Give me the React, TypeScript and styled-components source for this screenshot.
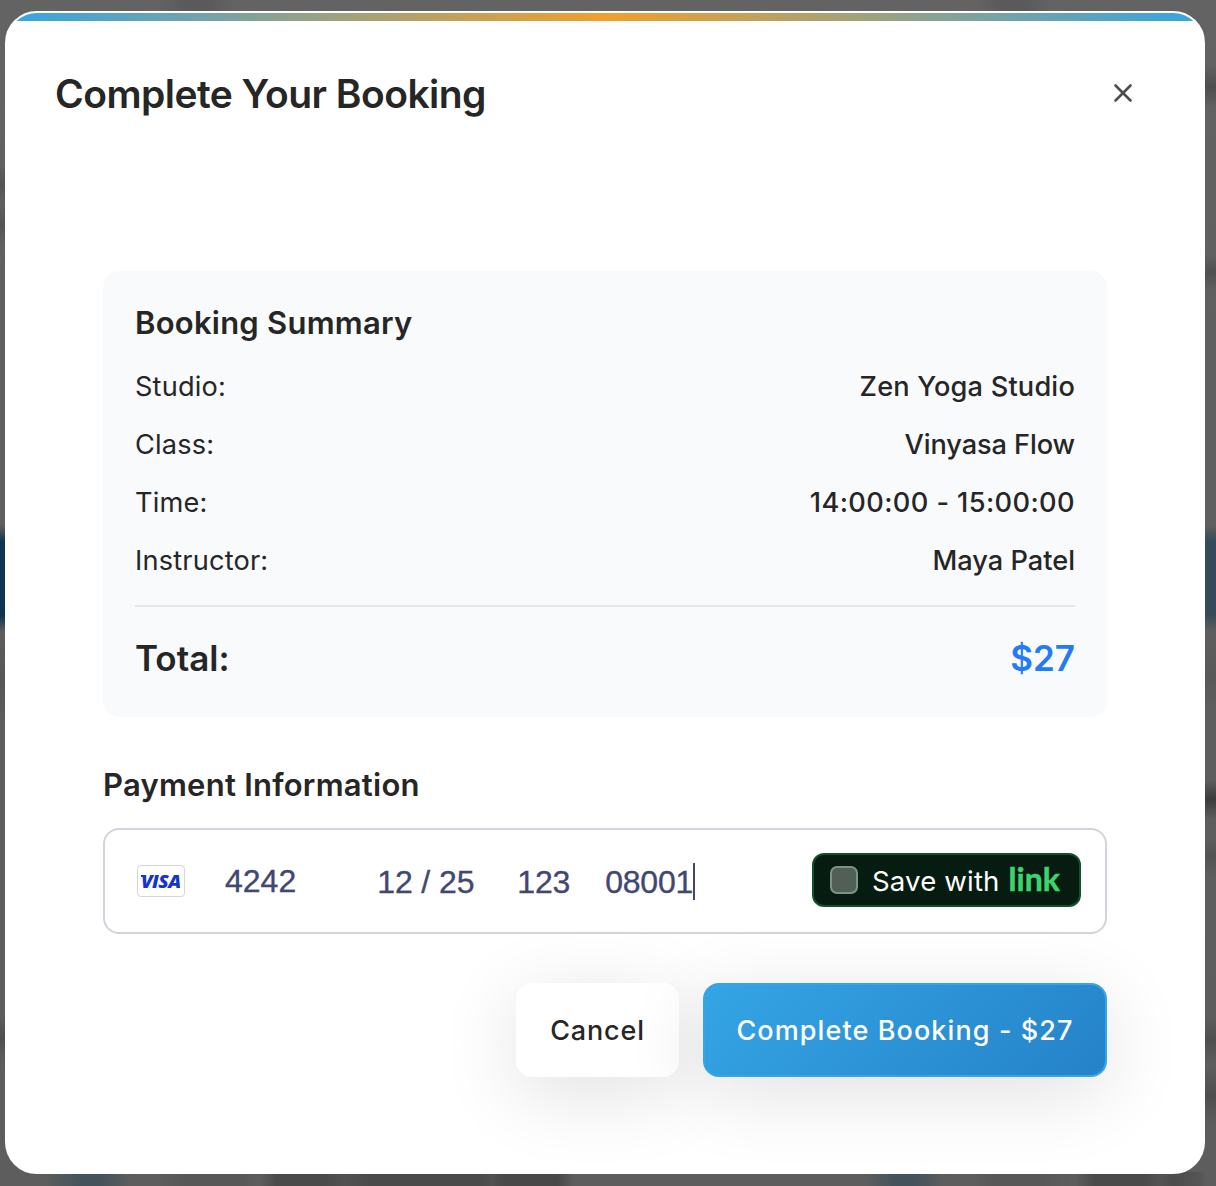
import React from "react";
import styled, { createGlobalStyle } from "styled-components";

const GlobalStyle = createGlobalStyle`
  * { box-sizing: border-box; }
  body { margin: 0; background: #616161; font-family: Inter, "Liberation Sans", sans-serif; color: #262626; }
  h2, h3 { margin: 0; font-weight: 600; }
  button { font-family: inherit; cursor: pointer; }
`;

const Backdrop = styled.div`
  width: 100%;
  height: 1186px;
  padding: 11px 11px 12px 5px;
  overflow: hidden;
  background:
    linear-gradient(90deg, transparent 160px, #5a5a5a 185px 210px, transparent 235px) 0 0 / 1216px 12px no-repeat,
    linear-gradient(90deg, transparent 978px, #5a5a5a 1003px 1026px, transparent 1050px) 0 0 / 1216px 12px no-repeat,
    linear-gradient(90deg, transparent 45px, #44525b 80px 100px, transparent 130px, transparent 160px, #575757 185px 240px, transparent 260px, #4a4a4a 276px 325px, #515151 345px, #4a4a4a 370px 480px, #505050 492px, #484848 505px 558px, transparent 574px) 0 1172px / 1216px 14px no-repeat,
    linear-gradient(90deg, transparent 865px, #44525b 895px 915px, transparent 945px, transparent 975px, #575757 995px 1035px, transparent 1075px, #4a4a4a 1095px 1145px, #535353 1160px, #4c4c4c 1175px, #555 1200px, transparent 1206px) 0 1172px / 1216px 14px no-repeat,
    linear-gradient(180deg, transparent 165px, #545454 185px, transparent 205px, #545454 225px, transparent 245px, transparent 525px, #10344f 542px 616px, transparent 632px, #565656 680px, transparent 730px, transparent 1015px, #4f4f4f 1038px, transparent 1060px) 0 0 / 6px 1186px no-repeat,
    linear-gradient(180deg, transparent 65px, #4e4e4e 87px, transparent 108px, transparent 255px, #4f4f4f 272px, transparent 290px, transparent 525px, #344b59 542px 614px, transparent 632px, #595959 680px, transparent 710px, transparent 780px, #3b3b3b 799px, transparent 820px, transparent 838px, #525252 856px, transparent 875px, transparent 1015px, #505050 1040px, transparent 1065px, #4e4e4e 1096px, transparent 1125px) 1204px 0 / 12px 1186px no-repeat,
    linear-gradient(180deg, #636363, #5f5f5f 30%, #5d5d5d);
`;

const Dialog = styled.section`
  display: flex;
  flex-direction: column;
  height: 1163px;
  overflow: hidden;
  border: 2px solid #fff;
  border-radius: 32px;
  background: #fff;
`;

const Accent = styled.div`
  flex: none;
  height: 8px;
  background: linear-gradient(90deg, #34a5e5, #f29f2b 50%, #34a5e5);
`;

const Header = styled.header`
  display: flex;
  align-items: center;
  justify-content: space-between;
  height: 144px;
  padding: 0 70px 0 48px;
`;

const Title = styled.h2`
  padding-top: 2px;
  font-size: 39px;
  line-height: 48px;
  letter-spacing: -0.54px;
`;

const CloseButton = styled.button`
  display: flex;
  padding: 0;
  border: 0;
  background: none;
  color: #4d4d4d;
`;

const Body = styled.div`
  display: flex;
  flex-direction: column;
  padding: 106px 96px 0;
`;

const Summary = styled.div`
  height: 446px;
  padding: 32px;
  border-radius: 16px;
  background: #f9fafc;
`;

const SectionTitle = styled.h3`
  font-size: 31px;
  line-height: 40px;
  letter-spacing: 0.24px;
`;

const Rows = styled.dl`
  display: flex;
  flex-direction: column;
  gap: 16px;
  margin: 0;
  padding: 23px 0;
`;

const Row = styled.div`
  display: flex;
  justify-content: space-between;
  font-size: 27.2px;
  line-height: 42px;
`;

const Label = styled.dt`
  letter-spacing: 0.17px;
`;

const Value = styled.dd<{ $tracking: number }>`
  margin: 0;
  font-weight: 500;
  letter-spacing: ${(p) => p.$tracking}px;
`;

const Total = styled.div`
  display: flex;
  justify-content: space-between;
  padding-top: 26px;
  border-top: 2px solid #e5e7eb;
  font-size: 35px;
  line-height: 50px;
  font-weight: 600;
`;

const Price = styled.span`
  color: #237bf5;
`;

const Payment = styled.div`
  padding-top: 48px;
`;

const CardField = styled.div`
  display: flex;
  align-items: center;
  height: 106px;
  margin-top: 23px;
  padding: 0 24px 0 32px;
  border: 2px solid #d1d5db;
  border-radius: 16px;
  color: #424770;
  font: 32px/36px "Liberation Sans", sans-serif;
  -webkit-text-stroke: 0.35px #424770;
`;

const CardBrand = styled.span`
  position: relative;
  display: flex;
  align-items: center;
  justify-content: center;
  width: 48px;
  height: 32px;
  border: 1px solid #d6d6d9;
  border-radius: 4px;
  color: #1434cb;
  -webkit-text-stroke: 0;

  &::before {
    content: "";
    position: absolute;
    top: 9px;
    left: 3px;
    width: 5px;
    height: 1.5px;
    background: #1434cb;
  }
`;

const CardBrandName = styled.span`
  font: italic 800 18px/20px "Open Sans", sans-serif;
  letter-spacing: -0.5px;
  transform: scaleX(1.06);
`;

const CardPart = styled.span<{ $gap: number; $drop?: number; $tracking?: number }>`
  margin-left: ${(p) => p.$gap}px;
  padding-top: ${(p) => (p.$drop ?? 0) * 2}px;
  letter-spacing: ${(p) => p.$tracking ?? 0}px;
`;

const Caret = styled.i`
  width: 2px;
  height: 37px;
  background: #424770;
`;

const LinkButton = styled.button`
  display: flex;
  align-items: center;
  width: 269px;
  height: 54px;
  margin: 0 0 2px auto;
  padding: 0 16px;
  border: 2px solid #11502a;
  border-radius: 12px;
  background: #061c10;
  color: #fff;
  font: 27.6px/34px Inter, sans-serif;
  letter-spacing: 0.15px;
  -webkit-text-stroke: 0;
`;

const Check = styled.span`
  width: 28px;
  height: 28px;
  margin-right: 14px;
  border: 2px solid #81908a;
  border-radius: 7px;
  background: #506056;
`;

const LinkLabel = styled.span`
  padding-top: 2px;
`;

const LinkWord = styled.span`
  margin-left: 9px;
  padding-bottom: 2px;
  color: #3fd36f;
  font: 700 32px/34px Lato, sans-serif;
  letter-spacing: 0;
  -webkit-text-stroke: 0.5px #3fd36f;
`;

const Actions = styled.div`
  display: flex;
  justify-content: flex-end;
  gap: 24px;
  padding-top: 49px;
`;

const Action = styled.button<{ $primary?: boolean }>`
  width: ${(p) => (p.$primary ? 404 : 163)}px;
  height: 94px;
  padding: 0;
  border: 2px solid ${(p) => (p.$primary ? "#34a5e5" : "#fff")};
  border-radius: 16px;
  background: ${(p) => (p.$primary ? "linear-gradient(135deg, #34a5e5, #2582c8) padding-box, #34a5e5" : "#fff")};
  color: ${(p) => (p.$primary ? "#fff" : "#262626")};
  box-shadow: 0 16px 80px rgba(0, 0, 0, 0.12);
  font-size: 27px;
  font-weight: 480;
  letter-spacing: ${(p) => (p.$primary ? 1.1 : 0.85)}px;
`;

const details = [
  { label: "Studio:", value: "Zen Yoga Studio", tracking: 0.18 },
  { label: "Class:", value: "Vinyasa Flow", tracking: -0.1 },
  { label: "Time:", value: "14:00:00 - 15:00:00", tracking: 0.4 },
  { label: "Instructor:", value: "Maya Patel", tracking: 0 },
];

export default function App() {
  return (
    <Backdrop>
      <GlobalStyle />
      <Dialog role="dialog">
        <Accent />
        <Header>
          <Title>Complete Your Booking</Title>
          <CloseButton aria-label="Close">
            <svg width="20" height="20" viewBox="0 0 20 20" fill="none" stroke="currentColor" strokeWidth="2.6" strokeLinecap="round">
              <path d="M2.5 2.5l15 15M17.5 2.5l-15 15" />
            </svg>
          </CloseButton>
        </Header>
        <Body>
          <Summary>
            <SectionTitle>Booking Summary</SectionTitle>
            <Rows>
              {details.map(({ label, value, tracking }) => (
                <Row key={label}>
                  <Label>{label}</Label>
                  <Value $tracking={tracking}>{value}</Value>
                </Row>
              ))}
            </Rows>
            <Total>
              <span>Total:</span>
              <Price>$27</Price>
            </Total>
          </Summary>
          <Payment>
            <SectionTitle>Payment Information</SectionTitle>
            <CardField>
              <CardBrand>
                <CardBrandName>VISA</CardBrandName>
              </CardBrand>
              <CardPart $gap={40}>4242</CardPart>
              <CardPart $gap={81} $drop={1} $tracking={-0.1}>12 / 25</CardPart>
              <CardPart $gap={43} $drop={1} $tracking={-0.2}>123</CardPart>
              <CardPart $gap={35} $drop={1} $tracking={-0.2}>08001</CardPart>
              <Caret />
              <LinkButton>
                <Check />
                <LinkLabel>Save with</LinkLabel>
                <LinkWord>link</LinkWord>
              </LinkButton>
            </CardField>
          </Payment>
          <Actions>
            <Action>Cancel</Action>
            <Action $primary>Complete Booking - $27</Action>
          </Actions>
        </Body>
      </Dialog>
    </Backdrop>
  );
}
